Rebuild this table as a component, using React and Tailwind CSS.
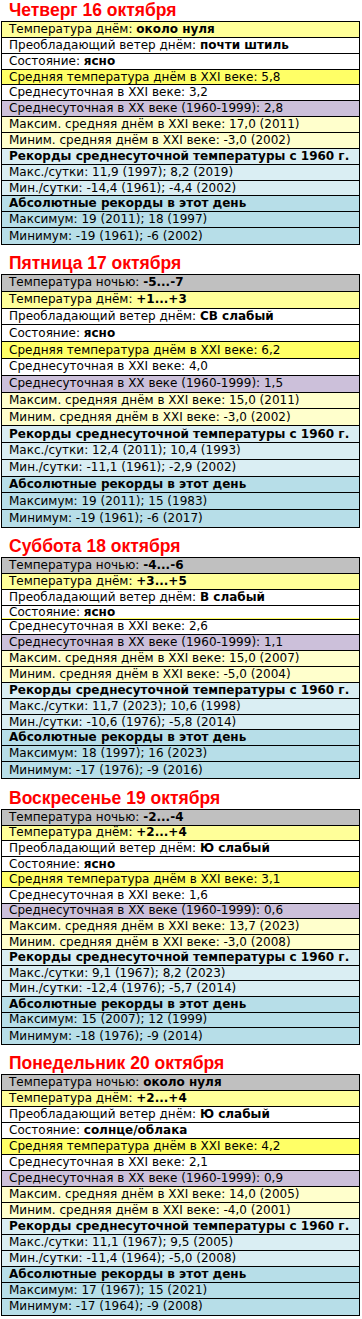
import React from "react";

const BG = {
  night: "bg-[#c0c0c0]",
  day: "bg-[#ffff99]",
  white: "bg-white",
  avg: "bg-[#ffff66]",
  xx: "bg-[#ccc0da]",
  mm: "bg-[#ffffcc]",
  rec: "bg-[#daeef3]",
  abs: "bg-[#b7dee8]",
};

function common(v) {
  return [
    { t: "avg", l: "Средняя температура днём в XXI веке: " + v.avg },
    { t: "white", l: "Среднесуточная в XXI веке: " + v.s21 },
    { t: "xx", l: "Среднесуточная в XX веке (1960-1999): " + v.s20 },
    { t: "mm", l: "Максим. средняя днём в XXI веке: " + v.max },
    { t: "mm", l: "Миним. средняя днём в XXI веке: " + v.min },
    { t: "rec", l: "Рекорды среднесуточной температуры с 1960 г.", head: true },
    { t: "rec", l: "Макс./сутки: " + v.rmax },
    { t: "rec", l: "Мин./сутки: " + v.rmin },
    { t: "abs", l: "Абсолютные рекорды в этот день", head: true },
    { t: "abs", l: "Максимум: " + v.amax },
    { t: "abs", l: "Минимум: " + v.amin },
  ];
}

const days = [
  {
    title: "Четверг 16 октября",
    top: "h-[21px]",
    rh: "h-[15.86px]",
    rows: [
      { t: "day", l: "Температура днём: ", b: "около нуля" },
      { t: "white", l: "Преобладающий ветер днём: ", b: "почти штиль" },
      { t: "white", l: "Состояние: ", b: "ясно" },
      ...common({
        avg: "5,8", s21: "3,2", s20: "2,8",
        max: "17,0 (2011)", min: "-3,0 (2002)",
        rmax: "11,9 (1997); 8,2 (2019)", rmin: "-14,4 (1961); -4,4 (2002)",
        amax: "19 (2011); 18 (1997)", amin: "-19 (1961); -6 (2002)",
      }),
    ],
  },
  {
    title: "Пятница 17 октября",
    top: "h-[29px]",
    rh: "h-[16.8px]",
    rows: [
      { t: "night", l: "Температура ночью: ", b: "-5...-7" },
      { t: "day", l: "Температура днём: ", b: "+1...+3" },
      { t: "white", l: "Преобладающий ветер днём: ", b: "СВ слабый" },
      { t: "white", l: "Состояние: ", b: "ясно" },
      ...common({
        avg: "6,2", s21: "4,0", s20: "1,5",
        max: "15,0 (2011)", min: "-3,0 (2002)",
        rmax: "12,4 (2011); 10,4 (1993)", rmin: "-11,1 (1961); -2,9 (2002)",
        amax: "19 (2011); 15 (1983)", amin: "-19 (1961); -6 (2017)",
      }),
    ],
  },
  {
    title: "Суббота 18 октября",
    top: "h-[29px]",
    rh: "h-[15.85px]",
    rows: [
      { t: "night", l: "Температура ночью: ", b: "-4...-6" },
      { t: "day", l: "Температура днём: ", b: "+3...+5" },
      { t: "white", l: "Преобладающий ветер днём: ", b: "В слабый" },
      { t: "white", l: "Состояние: ", b: "ясно", squash: "h-[12px] border-b-0 items-start" },
      { t: "avg", l: "", squash: "h-[2px]" },
      ...common({
        avg: "", s21: "2,6", s20: "1,1",
        max: "15,0 (2007)", min: "-5,0 (2004)",
        rmax: "11,7 (2023); 10,6 (1998)", rmin: "-10,6 (1976); -5,8 (2014)",
        amax: "18 (1997); 16 (2023)", amin: "-17 (1976); -9 (2016)",
      }).slice(1),
    ],
  },
  {
    title: "Воскресенье 19 октября",
    top: "h-[30px]",
    rh: "h-[15.6px]",
    rows: [
      { t: "night", l: "Температура ночью: ", b: "-2...-4" },
      { t: "day", l: "Температура днём: ", b: "+2...+4" },
      { t: "white", l: "Преобладающий ветер днём: ", b: "Ю слабый" },
      { t: "white", l: "Состояние: ", b: "ясно" },
      ...common({
        avg: "3,1", s21: "1,6", s20: "0,6",
        max: "13,7 (2023)", min: "-3,0 (2008)",
        rmax: "9,1 (1967); 8,2 (2023)", rmin: "-12,4 (1976); -5,7 (2014)",
        amax: "15 (2007); 12 (1999)", amin: "-18 (1976); -9 (2014)",
      }),
    ],
  },
  {
    title: "Понедельник 20 октября",
    top: "h-[29px]",
    rh: "h-[16px]",
    rows: [
      { t: "night", l: "Температура ночью: ", b: "около нуля" },
      { t: "day", l: "Температура днём: ", b: "+2...+4" },
      { t: "white", l: "Преобладающий ветер днём: ", b: "Ю слабый" },
      { t: "white", l: "Состояние: ", b: "солнце/облака" },
      ...common({
        avg: "4,2", s21: "2,1", s20: "0,9",
        max: "14,0 (2005)", min: "-4,0 (2001)",
        rmax: "11,1 (1967); 9,5 (2005)", rmin: "-11,4 (1964); -5,0 (2008)",
        amax: "17 (1967); 15 (2021)", amin: "-17 (1964); -9 (2008)",
      }),
    ],
  },
];

function Day({ d }) {
  return (
    <div>
      <div className={`${d.top} flex items-end pl-[9px] pb-[3px]`}>
        <h2 className="font-['Liberation_Sans',Arial,sans-serif] text-[17.5px] leading-[16px] font-bold text-[#ff0000]">
          {d.title}
        </h2>
      </div>
      <div className="ml-[1px] w-[359px] border border-black font-['DejaVu_Sans',Verdana,sans-serif] text-[12px] text-black">
        {d.rows.map((r, i) => (
          <div
            key={i}
            className={`${BG[r.t]} ${r.squash ? r.squash : d.rh} flex items-center overflow-hidden whitespace-nowrap pl-[7px] border-b border-black last:border-b-0 ${r.head ? "font-bold" : ""}`}
          >
            <span className="leading-[13px]">
              {r.l}
              {r.b && <b>{r.b}</b>}
            </span>
          </div>
        ))}
      </div>
    </div>
  );
}

export default function App() {
  return (
    <div className="w-[362px] bg-white pb-[3px]">
      {days.map((d, i) => (
        <Day key={i} d={d} />
      ))}
    </div>
  );
}
